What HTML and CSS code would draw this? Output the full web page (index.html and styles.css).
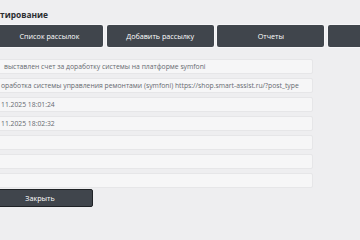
FILE: index.html
```html
<!DOCTYPE html>
<html lang="ru">
<head>
<meta charset="utf-8">
<link rel="stylesheet" href="styles.css">
</head>
<body>
<div class="page">
  <h1 class="title">тирование</h1>
  <nav class="tabs">
    <button class="tab">Список рассылок</button>
    <button class="tab">Добавить рассылку</button>
    <button class="tab">Отчеты</button>
    <button class="tab" aria-label="Настройки"></button>
  </nav>
  <div class="fields">
    <div class="field"><span class="val v1">выставлен счет за доработку системы на платформе symfoni</span></div>
    <div class="field"><span class="val v2">оработка системы управления ремонтами (symfoni) https://shop.smart-assist.ru/?post_type</span></div>
    <div class="field"><span class="val v3">11.2025 18:01:24</span></div>
    <div class="field"><span class="val v3">11.2025 18:02:32</span></div>
    <div class="field"></div>
    <div class="field"></div>
    <div class="field"></div>
  </div>
  <button class="close">Закрыть</button>
</div>
</body>
</html>
```
FILE: styles.css
```css
html, body {
  margin: 0;
  padding: 0;
  background: #eeeef0;
  width: 360px;
  height: 240px;
  overflow: hidden;
}
.page {
  font-family: "Open Sans", "Noto Sans", sans-serif;
  display: flex;
  flex-direction: column;
  align-items: flex-start;
}
.title {
  margin: 0;
  padding-top: 8px;
  height: 17px;
  font-size: 8.4px;
  line-height: 14px;
  font-weight: 700;
  color: #2b2d31;
}
.tabs {
  display: flex;
  gap: 3.7px;
  margin-left: -4px;
  height: 22px;
}
.tab {
  flex: 0 0 107px;
  height: 22px;
  background: #40454c;
  color: #fff;
  border: none;
  border-radius: 2px;
  box-shadow: 0 0 0 1px #f6f6f8;
  font-family: "Open Sans", "Noto Sans", sans-serif;
  font-size: 7.2px;
  padding: 0;
}
.fields {
  margin-top: 12px;
  margin-left: -10px;
  display: flex;
  flex-direction: column;
  gap: 4px;
}
.field {
  box-sizing: border-box;
  width: 323px;
  height: 15px;
  background: #f6f6f7;
  border: 1px solid #e6e6e8;
  border-radius: 2px;
  overflow: hidden;
  white-space: nowrap;
  display: flex;
  align-items: center;
}
.val {
  font-size: 6.8px;
  color: #666a70;
}
.v1 { padding-left: 13px; }
.v2 { padding-left: 10px; }
.v3 { padding-left: 10px; }
.close {
  margin-top: 1px;
  margin-left: -13px;
  width: 106px;
  height: 18px;
  background: #40454c;
  color: #fff;
  border: 1px solid #1f2226;
  border-radius: 2px;
  font-family: "Open Sans", "Noto Sans", sans-serif;
  font-size: 7.2px;
  padding: 0;
}
```
